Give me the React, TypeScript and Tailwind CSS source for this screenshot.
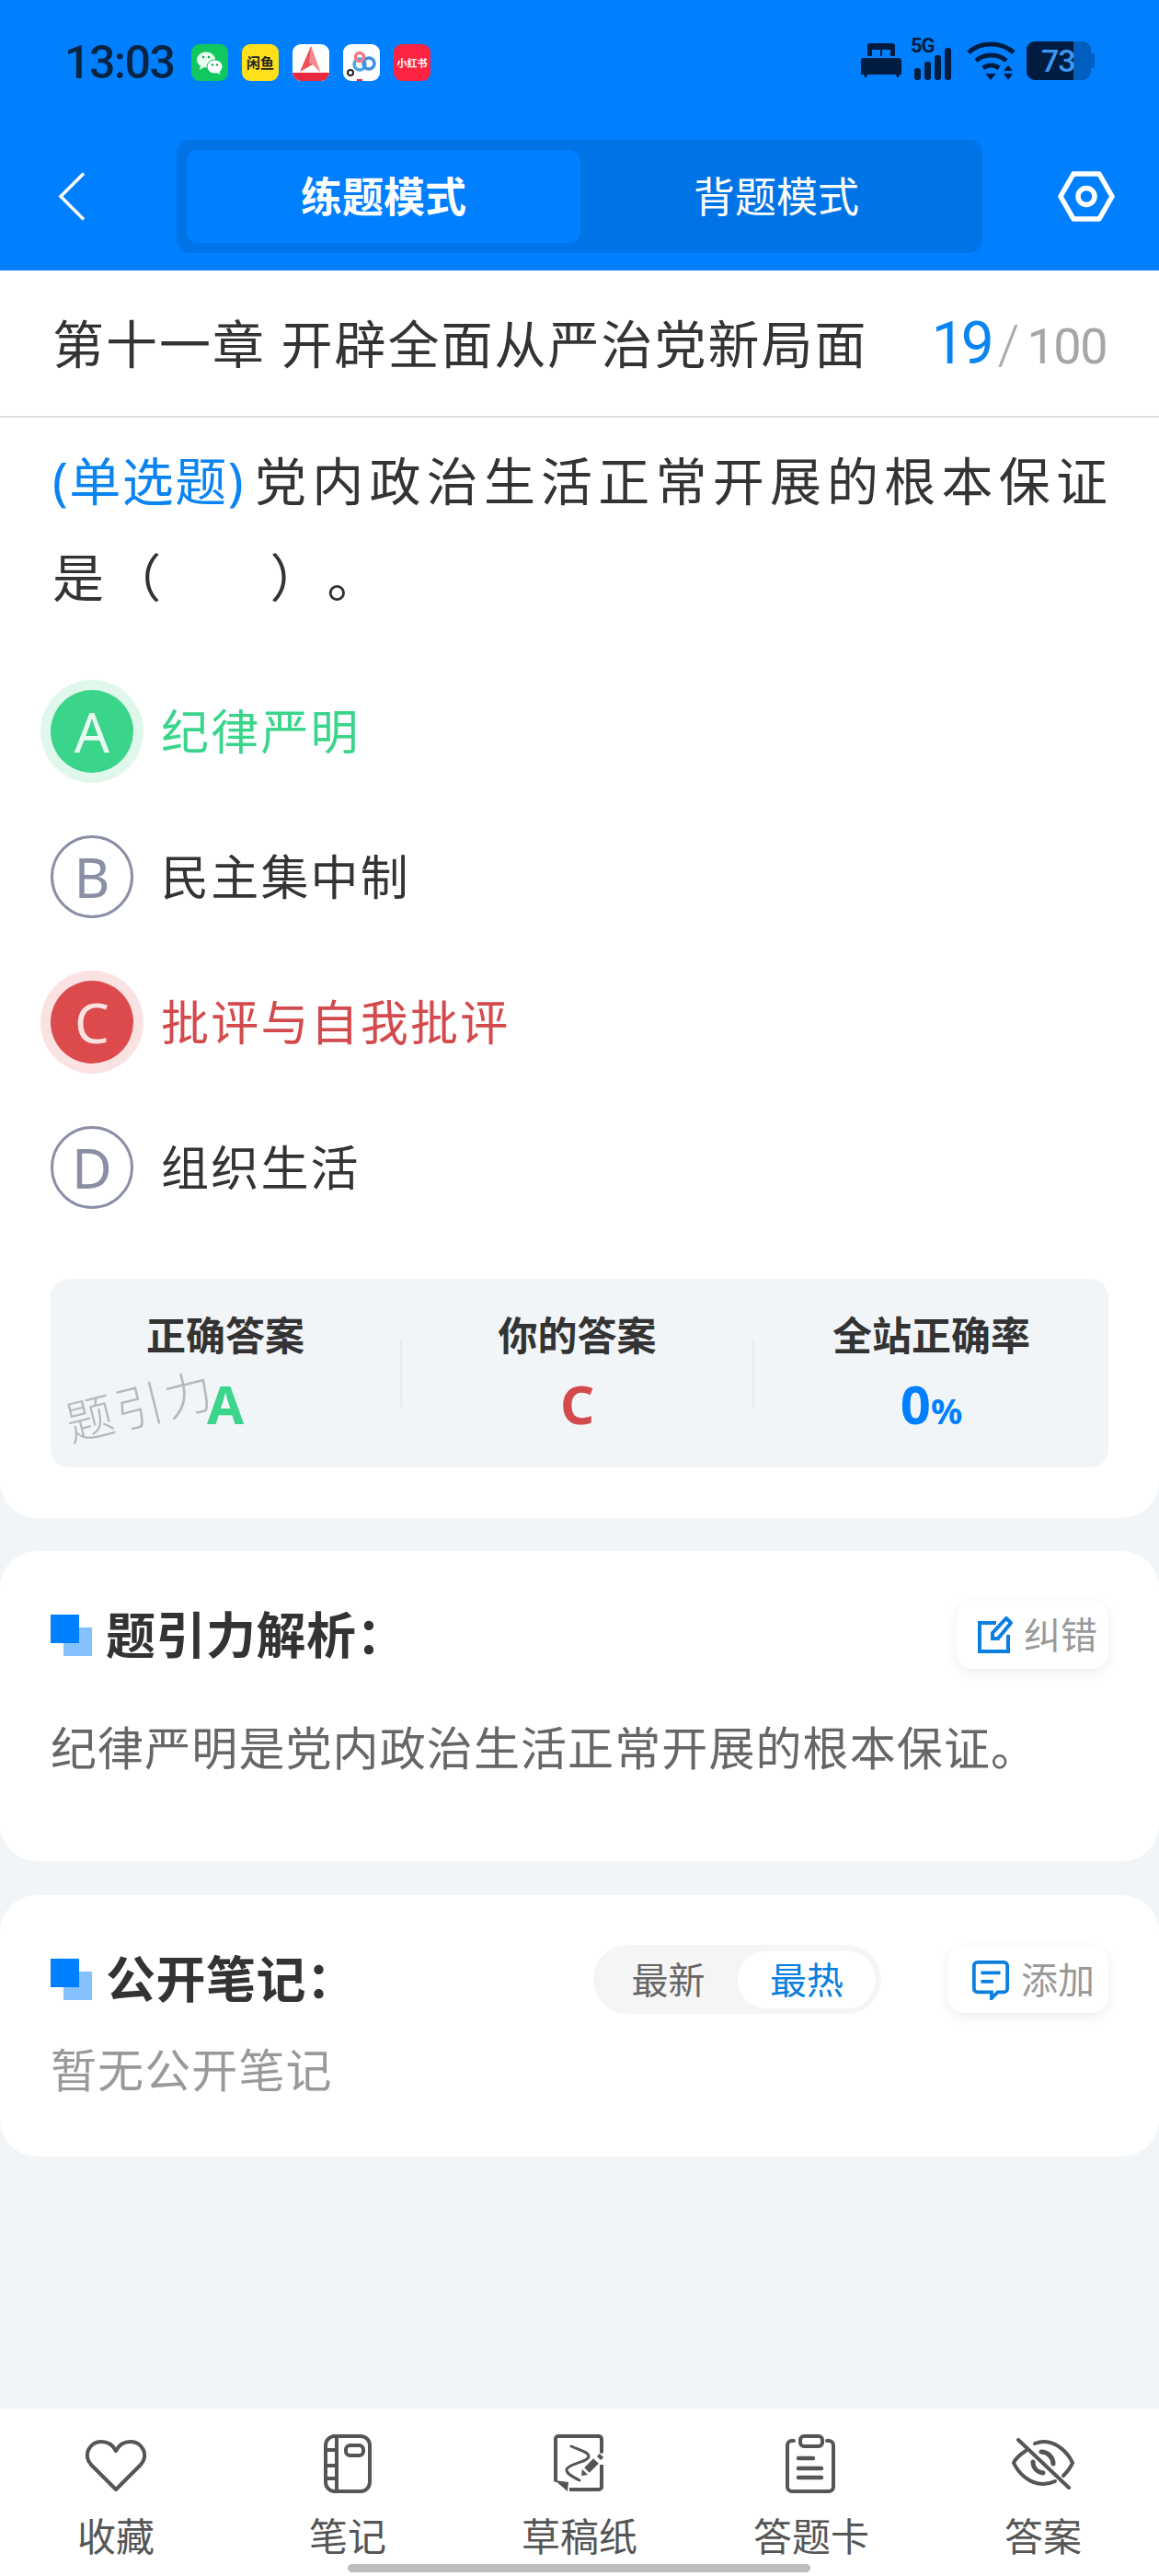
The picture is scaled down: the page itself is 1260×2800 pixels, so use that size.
import React from 'react'

const options = [
  { key: 'A', text: '纪律严明', state: 'right' },
  { key: 'B', text: '民主集中制', state: 'idle' },
  { key: 'C', text: '批评与自我批评', state: 'wrong' },
  { key: 'D', text: '组织生活', state: 'idle' },
]

function WeChatIcon() {
  return (
    <svg width="40" height="40" viewBox="0 0 40 40">
      <rect width="40" height="40" rx="9" fill="#10c85f" />
      <ellipse cx="16" cy="17" rx="10" ry="8.5" fill="#eafff2" />
      <path d="M10 23l-1 5 5-3z" fill="#eafff2" />
      <ellipse cx="25.5" cy="24.5" rx="8.5" ry="7.5" fill="#fff" stroke="#10c85f" strokeWidth="1" />
      <path d="M30 30l2 3-5-2z" fill="#fff" />
      <circle cx="13" cy="14" r="1.3" fill="#10a850" />
      <circle cx="19" cy="14" r="1.3" fill="#10a850" />
      <circle cx="23" cy="22.5" r="1.2" fill="#10a850" />
      <circle cx="28" cy="22.5" r="1.2" fill="#10a850" />
    </svg>
  )
}

function RedAIcon() {
  return (
    <svg width="40" height="40" viewBox="0 0 40 40">
      <rect width="40" height="40" rx="9" fill="#fff" />
      <path d="M20 2L30 30 22 22 8 30z" fill="#f0505a" />
      <path d="M20 2l-2 18 4 2 8 8z" fill="#f78a90" />
      <path d="M0 31h40v0a9 9 0 0 1-9 9H9a9 9 0 0 1-9-9z" fill="#e8283c" />
    </svg>
  )
}

function LoopIcon() {
  return (
    <svg width="40" height="40" viewBox="0 0 40 40">
      <rect width="40" height="40" rx="9" fill="#fff" />
      <circle cx="18" cy="22" r="6" fill="none" stroke="#4aa8e0" strokeWidth="3.5" />
      <circle cx="28" cy="21" r="6" fill="none" stroke="#3e8fe0" strokeWidth="3.5" />
      <circle cx="18" cy="14" r="4.5" fill="none" stroke="#ef7d87" strokeWidth="3.5" />
      <circle cx="8" cy="31" r="3" fill="#fff" stroke="#222" strokeWidth="2" />
      <rect x="15" y="38" width="6" height="2" fill="#e8283c" />
    </svg>
  )
}

function StatusIcons() {
  return (
    <div className="flex items-center text-[#001c40]">
      <svg width="44" height="38" viewBox="0 0 44 38" fill="currentColor">
        <path d="M7 3a3 3 0 0 1 3-3h24a3 3 0 0 1 3 3v11h-5V7h-9v7h-2V7h-9v7H7z" />
        <path d="M3 16h38a3 3 0 0 1 3 3v15h-2l-1 3h-2l-1-3H7l-1 3H4l-1-3H0V19a3 3 0 0 1 3-3z" />
      </svg>
      <div className="relative ml-[11px] h-[42px] w-[48px]">
        <span className="absolute left-[-1px] top-[-7px] font-['Roboto',sans-serif] text-[22px] font-bold leading-[24px] tracking-[-1px]">5G</span>
        <div className="absolute bottom-0 left-[3px] flex items-end gap-[4px]">
          <div className="h-[13px] w-[7px] rounded-[3px] bg-[#001c40]" />
          <div className="h-[20px] w-[7px] rounded-[3px] bg-[#001c40]" />
          <div className="h-[27px] w-[7px] rounded-[3px] bg-[#001c40]" />
          <div className="h-[35px] w-[7px] rounded-[3px] bg-[#001c40]" />
        </div>
      </div>
      <svg className="ml-[12px]" width="54" height="44" viewBox="0 0 54 44" fill="none" stroke="currentColor" strokeWidth="5">
        <path d="M2 13c13-12 35-12 49 0" />
        <path d="M10 22c9-8 24-8 33 0" />
        <path d="M18 30c5-4 12-4 17 0" />
        <path d="M20 36h12l-6 7z" fill="currentColor" stroke="none" />
        <path d="M45 27l5 6H40zM45 43l5-7H40z" fill="currentColor" stroke="none" />
      </svg>
      <div className="relative ml-[11px] flex h-[42px] w-[70px] items-center overflow-hidden rounded-[9px] bg-[#005fc0]">
        <div className="absolute inset-y-0 left-0 w-[51px] bg-[#001c40]" />
        <span className="relative ml-[16px] font-['Roboto',sans-serif] text-[34px] font-medium leading-none tracking-[-1px] text-[#3f97f5]">73</span>
      </div>
      <div className="h-[16px] w-[4px] rounded-r-[3px] bg-[#005fc0]" />
    </div>
  )
}

function SectionMark() {
  return (
    <div className="relative h-[45px] w-[45px] shrink-0">
      <div className="absolute bottom-0 right-0 h-[31px] w-[31px] bg-[#85c1ff]" />
      <div className="absolute left-0 top-0 h-[31px] w-[31px] bg-[#0080ff]" />
    </div>
  )
}

function NavItem({ label, children }: { label: string; children: React.ReactNode }) {
  return (
    <div className="flex w-[252px] flex-col items-center">
      <div className="flex h-[72px] items-center justify-center">{children}</div>
      <span className="mt-[15px] text-[42px] leading-[56px] text-[#555]">{label}</span>
    </div>
  )
}

export default function App() {
  return (
    <div className="relative flex min-h-[2800px] w-[1260px] flex-col overflow-hidden bg-[#f2f5f8] font-['Noto_Sans','Noto_Sans_CJK_SC',sans-serif]">
      {/* header */}
      <div className="bg-[#0080ff] pb-[19px]">
        <div className="flex h-[152px] items-start pl-[70px] pr-[70px] pt-[44px]">
          <span className="w-[138px] font-['Roboto',sans-serif] text-[50px] font-medium leading-[48px] tracking-[-1.5px] text-[#0a2444]">13:03</span>
          <div className="mt-[4px] flex items-center gap-[15px]">
            <WeChatIcon />
            <div className="flex h-[40px] w-[40px] items-center justify-center rounded-[9px] bg-[#ffe01a] text-[15px] font-bold leading-none text-[#222]">闲鱼</div>
            <RedAIcon />
            <LoopIcon />
            <div className="flex h-[40px] w-[40px] items-center justify-center rounded-[9px] bg-[#ff2442] text-[11px] font-bold leading-none text-white">小红书</div>
          </div>
          <div className="ml-auto">
            <StatusIcons />
          </div>
        </div>
        <div className="flex h-[123px] items-center">
          <div className="flex w-[192px] pl-[63px]">
            <svg width="30" height="53" viewBox="0 0 30 53" fill="none" stroke="#fff" strokeWidth="3.5">
              <path d="M28 1.5L3 26.5l25 25" />
            </svg>
          </div>
          <div className="flex h-[123px] w-[876px] rounded-[14px] bg-[#0074e6] p-[11px]">
            <div className="flex w-[428px] items-center justify-center rounded-[12px] bg-[#007fff] text-[45px] font-bold text-white">练题模式</div>
            <div className="flex flex-1 items-center justify-center text-[45px] text-white">背题模式</div>
          </div>
          <div className="flex flex-1 pl-[82px]">
            <svg width="62" height="55" viewBox="0 0 62 55" fill="none" stroke="#fff" strokeWidth="5.5" strokeLinejoin="round">
              <path d="M17 3h28l14 24.5-14 24.5H17L3 27.5z" />
              <circle cx="31" cy="27.5" r="9" />
            </svg>
          </div>
        </div>
      </div>

      {/* question card */}
      <div className="rounded-b-[40px] bg-white pb-[55px]">
        <div className="flex h-[160px] items-center justify-between border-b-2 border-[#dfdfdf] pl-[57px] pr-[57px]">
          <span className="text-[56px] tracking-[2px] text-[#333]">第十一章 开辟全面从严治党新局面</span>
          <span className="mt-[2px] flex items-baseline font-['Roboto',sans-serif]">
            <span className="text-[64px] leading-none tracking-[-4px] text-[#0a84f0]">19</span>
            <span className="ml-[8px] text-[60px] font-light leading-none text-[#aaa]">/</span>
            <span className="ml-[8px] text-[54px] leading-none tracking-[-1.5px] text-[#a6a6a6]">100</span>
          </span>
        </div>
        <div className="ml-[57px] mr-[45px] mt-[16px] text-[56px] leading-[105px] tracking-[6.2px] text-[#333] [text-spacing-trim:space-all]">
          <span className="mr-[11px] tracking-[1.5px] text-[#0a84f0]">(单选题)</span>党内政治生活正常开展的根本保证是（<span className="inline-block w-[112px]" />）。
        </div>
        <div className="mt-[36px]">
          {options.map((o) => (
            <div key={o.key} className="flex h-[158px] items-center pl-[55px]">
              <div
                className={
                  o.state === 'right'
                    ? 'flex h-[90px] w-[90px] items-center justify-center rounded-full bg-[#3ad58a] text-[60px] leading-none text-[#e8fbf1] ring-[11px] ring-[#e0f8eb]'
                    : o.state === 'wrong'
                      ? 'flex h-[90px] w-[90px] items-center justify-center rounded-full bg-[#dc4a4c] text-[60px] leading-none text-[#fbe2e2] ring-[11px] ring-[#fbe2e2]'
                      : 'flex h-[90px] w-[90px] items-center justify-center rounded-full border-[3px] border-[#8a8fa6] text-[60px] leading-none text-[#8a8fa6]'
                }
              >
                {o.key}
              </div>
              <span
                className={
                  o.state === 'right'
                    ? 'ml-[30px] text-[52px] tracking-[2.2px] text-[#3ad58a]'
                    : o.state === 'wrong'
                      ? 'ml-[30px] text-[52px] tracking-[2.2px] text-[#d44a4c]'
                      : 'ml-[30px] text-[52px] tracking-[2.2px] text-[#333]'
                }
              >
                {o.text}
              </span>
            </div>
          ))}
        </div>
        <div className="relative mx-[55px] mt-[42px] flex h-[205px] items-center rounded-[20px] bg-[#f2f5f8]">
          <div className="flex-1 pb-[8px] text-center">
            <div className="text-[43px] font-bold leading-[60px] text-[#333]">正确答案</div>
            <div className="mt-[14px] h-[60px] text-[58px] font-bold leading-[60px] text-[#3ad58a]">A</div>
          </div>
          <div className="h-[72px] w-[2px] bg-[#e8eaee]" />
          <div className="w-[381px] pb-[8px] text-center">
            <div className="text-[43px] font-bold leading-[60px] text-[#333]">你的答案</div>
            <div className="mt-[14px] h-[60px] text-[58px] font-bold leading-[60px] text-[#d44a4c]">C</div>
          </div>
          <div className="h-[72px] w-[2px] bg-[#e8eaee]" />
          <div className="w-[385px] pb-[8px] text-center">
            <div className="text-[43px] font-bold leading-[60px] text-[#333]">全站正确率</div>
            <div className="mt-[14px] h-[60px] text-[58px] font-bold leading-[60px] text-[#0080ff]">
              0<span className="text-[38px]">%</span>
            </div>
          </div>
          <div className="absolute left-[15px] top-[112px] -rotate-[14deg] text-[52px] font-light leading-none tracking-[3px] text-[#b8b8b8]">题引力</div>
        </div>
      </div>

      {/* analysis */}
      <div className="mt-[36px] rounded-[40px] bg-white pl-[55px] pr-[55px] pb-[83px] pt-[54px]">
        <div className="flex h-[74px] items-center">
          <SectionMark />
          <span className="ml-[15px] text-[54px] font-bold tracking-[0.5px] text-[#333]">题引力解析：</span>
          <div className="ml-auto flex h-[74px] w-[165px] items-center rounded-[18px] bg-white pl-[23px] shadow-[0_4px_14px_rgba(0,0,0,0.07)]">
            <svg width="38" height="40" viewBox="0 0 38 40" fill="none" stroke="#0a7fe0" strokeWidth="4">
              <path d="M20 7H2v31h31V20" />
              <path d="M31 2l5 5-14 17h-6v-6z" />
            </svg>
            <span className="ml-[12px] text-[40px] text-[#999]">纠错</span>
          </div>
        </div>
        <div className="mt-[46px] text-[50px] leading-[80px] tracking-[1.1px] text-[#666]">纪律严明是党内政治生活正常开展的根本保证。</div>
      </div>

      {/* notes */}
      <div className="mt-[37px] rounded-[40px] bg-white pl-[55px] pr-[55px] pb-[59px] pt-[54px]">
        <div className="flex h-[75px] items-center">
          <SectionMark />
          <span className="ml-[15px] text-[54px] font-bold tracking-[0.5px] text-[#333]">公开笔记：</span>
          <div className="ml-auto flex h-[75px] w-[313px] items-center rounded-full bg-[#f5f5f5] p-[6px]">
            <span className="flex-1 text-center text-[40px] text-[#666]">最新</span>
            <span className="flex h-[62px] w-[150px] items-center justify-center rounded-full bg-white text-[40px] text-[#0a7fe0]">最热</span>
          </div>
          <div className="ml-[72px] flex h-[73px] w-[175px] items-center rounded-[18px] bg-white pl-[26px] shadow-[0_4px_14px_rgba(0,0,0,0.07)]">
            <svg width="42" height="44" viewBox="0 0 44 46" fill="none" stroke="#0a7fe0" strokeWidth="4">
              <path d="M7 3h30a4 4 0 0 1 4 4v26a4 4 0 0 1-4 4h-7l-7 7v-7H7a4 4 0 0 1-4-4V7a4 4 0 0 1 4-4z" />
              <path d="M11 15h22M11 25h14" />
            </svg>
            <span className="ml-[12px] text-[40px] text-[#999]">添加</span>
          </div>
        </div>
        <div className="mt-[26px] text-[50px] leading-[70px] tracking-[1.1px] text-[#999]">暂无公开笔记</div>
      </div>

      <div className="flex-1" />

      {/* bottom bar */}
      <div className="flex h-[182px] bg-white pt-[24px]">
        <NavItem label="收藏">
          <svg className="mt-[3px]" width="66" height="58" viewBox="0 0 66 58" fill="none" stroke="#555" strokeWidth="4" strokeLinejoin="round">
            <path d="M33 55L6 28C-4 16 6 3 17 3c8 0 13 4 16 10 3-6 8-10 16-10 11 0 21 13 11 25z" />
          </svg>
        </NavItem>
        <NavItem label="笔记">
          <svg width="52" height="64" viewBox="0 0 52 64" fill="none" stroke="#555" strokeWidth="4">
            <rect x="2" y="2" width="48" height="60" rx="10" />
            <path d="M14 2v60M2 17h12M2 34h12M2 48h12" />
            <rect x="24" y="12" width="19" height="11" rx="4.5" />
          </svg>
        </NavItem>
        <NavItem label="草稿纸">
          <svg width="56" height="64" viewBox="0 0 56 64" fill="none" stroke="#555" strokeWidth="4" strokeLinecap="round">
            <path d="M2 50V5a3 3 0 0 1 3-3h44a3 3 0 0 1 3 3v14" />
            <path d="M52 33v24a3 3 0 0 1-3 3H17" strokeLinecap="butt" />
            <path d="M1 50l15 2-1 10z" fill="#555" stroke="none" />
            <path d="M19 13C28 17 38 19 38 24 38 30 16 32 14 38 13 42 20 46 28 50" strokeWidth="3" />
            <path d="M36 39L46 29" strokeWidth="8" strokeLinecap="butt" />
            <path d="M30 45l1-7 6 6z" fill="#555" stroke="none" />
            <path d="M49 26l3-3" strokeWidth="6" strokeLinecap="butt" />
          </svg>
        </NavItem>
        <NavItem label="答题卡">
          <svg width="56" height="64" viewBox="0 0 56 64" fill="none" stroke="#555" strokeWidth="4" strokeLinecap="round">
            <path d="M9 7H7a5 5 0 0 0-5 5v45a5 5 0 0 0 5 5h40a5 5 0 0 0 5-5V12a5 5 0 0 0-5-5h-2" />
            <rect x="16" y="2" width="24" height="11" rx="4" />
            <path d="M14 26h16M14 37h25M14 47h25" strokeWidth="4.5" />
          </svg>
        </NavItem>
        <NavItem label="答案">
          <svg width="70" height="56" viewBox="0 0 70 56" fill="none" stroke="#555" strokeWidth="4" strokeLinecap="round">
            <path d="M26 6C30 4.500 33 4 36 4 50 4 62 16 67 27 65 32 61 37 57 41" />
            <path d="M16 14C10 18 5 22 3 27 8 38 20 50 35 50 40 50 44 49 48 47" />
            <path d="M33 15C40 15 46 21 46 28" strokeWidth="5" />
            <path d="M24 26C24 32 28 37 35 38" strokeWidth="5" />
            <path d="M8 2l55 52" />
          </svg>
        </NavItem>
      </div>
      <div className="absolute bottom-[4px] left-[378px] h-[9px] w-[503px] rounded-full bg-[#bdbdbd]" />
    </div>
  )
}
